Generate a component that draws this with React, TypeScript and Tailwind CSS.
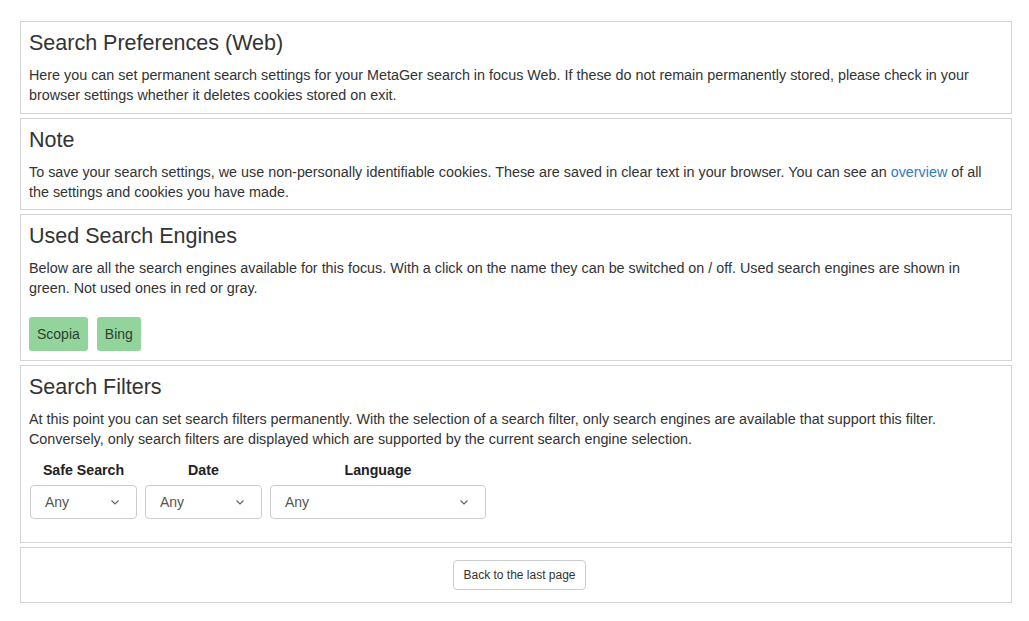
import React from "react";

function Chevron() {
  return (
    <svg width="12" height="12" viewBox="0 0 12 12" fill="none" stroke="#666" strokeWidth="1.2">
      <path d="M2.5 4.5 L6 8 L9.5 4.5" />
    </svg>
  );
}

function Card({ children, className = "" }: { children: React.ReactNode; className?: string }) {
  return (
    <div className={"border border-[#d4d4d4] bg-white px-[8px] pt-[8px] " + className}>{children}</div>
  );
}

function Title({ children }: { children: React.ReactNode }) {
  return <h3 className="text-[21.5px] leading-[26px] text-[#333] mb-[9px]">{children}</h3>;
}

function Select({ w }: { w: string }) {
  return (
    <div className={"h-[34px] border border-[#ccc] rounded-[4px] flex items-center justify-between pl-[14px] pr-[15px] text-[14px] text-[#555] bg-white " + w}>
      <span>Any</span>
      <Chevron />
    </div>
  );
}

const body = "text-[14.35px] leading-[20px] text-[#333]";
const label = "text-[14.2px] font-bold text-[#222] leading-[18px]";

export default function App() {
  return (
    <div className="w-[1029px] h-[621px] bg-white pt-[21px] pl-[20px] pr-[17px]" style={{ fontFamily: '"Liberation Sans", Arial, sans-serif' }}>
      <div className="flex flex-col gap-[4px]">
        <Card className="pb-[8px]">
          <Title>Search Preferences (Web)</Title>
          <p className={body}>
            Here you can set permanent search settings for your MetaGer search in focus Web. If these do not remain permanently stored, please check in your browser settings whether it deletes cookies stored on exit.
          </p>
        </Card>
        <Card className="pb-[7px]">
          <Title>Note</Title>
          <p className={body}>
            To save your search settings, we use non-personally identifiable cookies. These are saved in clear text in your browser. You can see an <a className="text-[#337ab7]">overview</a> of all the settings and cookies you have made.
          </p>
        </Card>
        <Card className="pb-[9px]">
          <Title>Used Search Engines</Title>
          <p className={body}>
            Below are all the search engines available for this focus. With a click on the name they can be switched on / off. Used search engines are shown in green. Not used ones in red or gray.
          </p>
          <div className="flex gap-[9px] mt-[19px]">
            <div className="h-[34px] px-[8px] flex items-center rounded-[3px] bg-[#92d49b] text-[14px] text-[#2f3f30]">Scopia</div>
            <div className="h-[34px] px-[8px] flex items-center rounded-[3px] bg-[#92d49b] text-[14px] text-[#2f3f30]">Bing</div>
          </div>
        </Card>
        <Card className="pb-[23px]">
          <Title>Search Filters</Title>
          <p className={body}>
            At this point you can set search filters permanently. With the selection of a search filter, only search engines are available that support this filter. Conversely, only search filters are displayed which are supported by the current search engine selection.
          </p>
          <div className="flex gap-[8px] mt-[12px] ml-[1px]">
            <div className="flex flex-col items-center gap-[6px]">
              <span className={label}>Safe Search</span>
              <Select w="w-[107px]" />
            </div>
            <div className="flex flex-col items-center gap-[6px]">
              <span className={label}>Date</span>
              <Select w="w-[117px]" />
            </div>
            <div className="flex flex-col items-center gap-[6px]">
              <span className={label}>Language</span>
              <Select w="w-[216px]" />
            </div>
          </div>
        </Card>
        <Card className="flex justify-center pt-[12px] pb-[12px]">
          <button className="h-[30px] px-[9px] border border-[#ccc] rounded-[4px] bg-white text-[12px] text-[#333] ml-[7px]">
            Back to the last page
          </button>
        </Card>
      </div>
    </div>
  );
}
